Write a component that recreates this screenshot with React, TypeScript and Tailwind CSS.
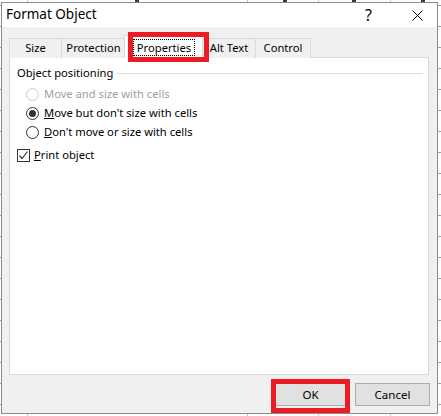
import React from "react";

const font = { fontFamily: '"Noto Sans", "Open Sans", Arial, sans-serif' };

function Radio({ checked, disabled }: { checked?: boolean; disabled?: boolean }) {
  return (
    <span
      className={`w-[13px] h-[13px] rounded-full border flex items-center justify-center bg-white shrink-0 ${
        disabled ? "border-[#cccccc]" : "border-[#333333]"
      }`}
    >
      {checked && <span className="w-[7px] h-[7px] rounded-full bg-[#333333]" />}
    </span>
  );
}

function Tab({ label, w }: { label: string; w: string }) {
  return (
    <div
      className={`${w} h-[20px] -ml-px first:ml-0 border border-b-0 border-[#d9d9d9] bg-[#f0f0f0] flex items-center justify-center text-[11.2px] text-black`}
    >
      {label}
    </div>
  );
}

export default function App() {
  const rows = Array.from({ length: 20 }, (_, i) => 5 + 21 * i);
  return (
    <div className="relative w-[441px] h-[416px] bg-white overflow-hidden" style={font}>
      <svg className="absolute inset-0" width="441" height="416">
        {rows.map((y) => (
          <line key={y} x1="0" x2="441" y1={y + 0.5} y2={y + 0.5} stroke="#9e9e9e" />
        ))}
        {[27, 247, 318, 390].map((x) => (
          <line key={x} x1={x + 0.5} x2={x + 0.5} y1="0" y2="416" stroke="#c8c8c8" />
        ))}
        {[135, 283, 352, 421].map((x) => (
          <rect key={x} x={x} y="0" width="4" height="2" fill="#3a3a3a" />
        ))}
      </svg>

      <div className="relative ml-[1px] mt-[2px] w-[437px] h-[412px] border border-[#8c8c8c] bg-[#f0f0f0] flex flex-col">
        {/* Title bar */}
        <div className="h-[24px] bg-white flex items-center text-black">
          <span className="pl-[4px] text-[13.5px] leading-none">Format Object</span>
          <span className="ml-auto mr-[40px] text-[16px] leading-none">?</span>
          <svg width="11" height="11" viewBox="0 0 11 11" className="mr-[14px]">
            <path d="M0.5 0.5 L10.5 10.5 M10.5 0.5 L0.5 10.5" stroke="#000" strokeWidth="1" />
          </svg>
        </div>

        {/* Body */}
        <div className="flex flex-col pl-[7px] pr-[8px] pt-[8px]">
          <div className="flex items-end h-[23px] relative z-10 -mb-px">
            <Tab label="Size" w="w-[53px]" />
            <Tab label="Protection" w="w-[65px]" />
            <div className="w-[80px] h-[23px] -ml-[2px] border border-b-0 border-[#d9d9d9] bg-white flex items-start justify-center pt-[3px] text-[11.2px] text-black">
              <span className="border border-dotted border-black px-[3px] leading-[15px]">Properties</span>
            </div>
            <Tab label="Alt Text" w="w-[54px] ml-[-2px]" />
            <Tab label="Control" w="w-[56px]" />
          </div>

          <div className="h-[318px] bg-white border border-[#d9d9d9] pt-[7px] pl-[7px] pr-[5px] text-[11.2px] text-black">
            <div className="flex items-center h-[16px]">
              <span>Object positioning</span>
              <span className="flex-1 h-px bg-[#dcdcdc] ml-[4px]" />
            </div>
            <div className="pl-[9px] mt-[4px] flex flex-col">
              <div className="flex items-center h-[19px] gap-[5px] text-[#a0a0a0]">
                <Radio disabled />
                <span>Move and size with cells</span>
              </div>
              <div className="flex items-center h-[19px] gap-[5px]">
                <Radio checked />
                <span>
                  <span className="underline">M</span>ove but don't size with cells
                </span>
              </div>
              <div className="flex items-center h-[19px] gap-[5px]">
                <Radio />
                <span>
                  <span className="underline">D</span>on't move or size with cells
                </span>
              </div>
            </div>
            <div className="flex items-center h-[19px] gap-[4px] mt-[4px]">
              <span className="w-[13px] h-[13px] border border-[#333333] bg-white flex items-center justify-center shrink-0">
                <svg width="11" height="11" viewBox="0 0 11 11">
                  <path d="M1.5 5.5 L4 8.5 L9.5 1.5" fill="none" stroke="#333" strokeWidth="1.2" />
                </svg>
              </span>
              <span>
                <span className="underline">P</span>rint object
              </span>
            </div>
          </div>

          <div className="flex justify-end gap-[7px] mt-[8px] mr-[-1px]">
            <button className="w-[75px] h-[23px] bg-[#e1e1e1] border border-[#adadad] text-[11.5px] text-black">
              OK
            </button>
            <button className="w-[75px] h-[23px] bg-[#e1e1e1] border border-[#adadad] text-[11.5px] text-black">
              Cancel
            </button>
          </div>
        </div>
      </div>

      {/* red annotation boxes */}
      <div className="absolute z-20 left-[128px] top-[32px] w-[81px] h-[30px] border-[5px] border-[#ed1c24] pointer-events-none" />
      <div className="absolute z-20 left-[271px] top-[379px] w-[79px] h-[34px] border-[5px] border-[#ed1c24] pointer-events-none" />
    </div>
  );
}
